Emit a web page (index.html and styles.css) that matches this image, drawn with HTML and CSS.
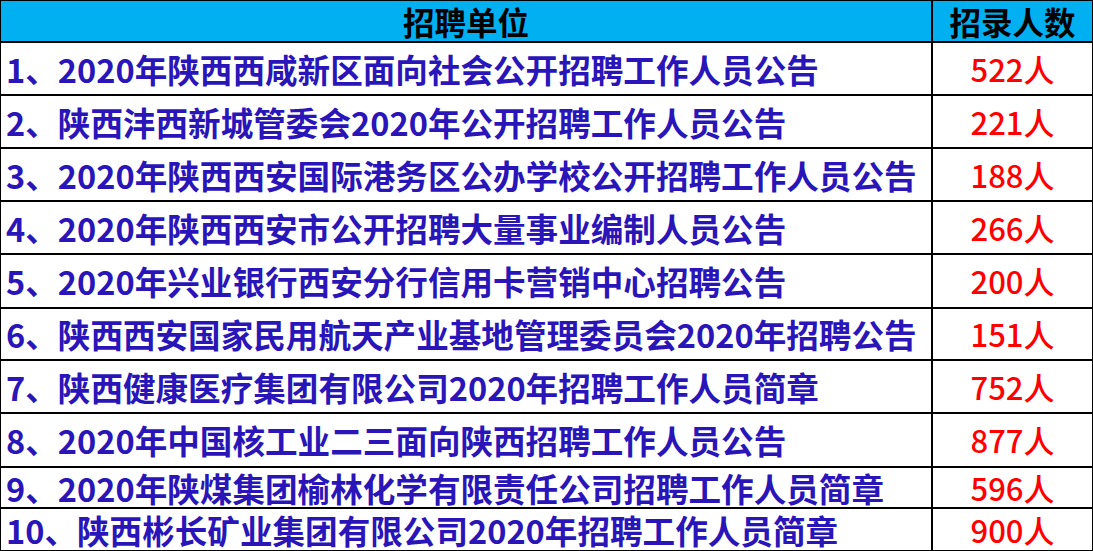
FILE: index.html
```html
<!DOCTYPE html>
<html lang="zh">
<head>
<meta charset="utf-8">
<title>招聘单位</title>
<link rel="stylesheet" href="styles.css">
</head>
<body>
<div class="sheet">
  <div class="cell head">招聘单位</div>
  <div class="cell head">招录人数</div>

  <div class="cell name">1、2020年陕西西咸新区面向社会公开招聘工作人员公告</div>
  <div class="cell num">522人</div>

  <div class="cell name">2、陕西沣西新城管委会2020年公开招聘工作人员公告</div>
  <div class="cell num">221人</div>

  <div class="cell name">3、2020年陕西西安国际港务区公办学校公开招聘工作人员公告</div>
  <div class="cell num">188人</div>

  <div class="cell name">4、2020年陕西西安市公开招聘大量事业编制人员公告</div>
  <div class="cell num">266人</div>

  <div class="cell name">5、2020年兴业银行西安分行信用卡营销中心招聘公告</div>
  <div class="cell num">200人</div>

  <div class="cell name">6、陕西西安国家民用航天产业基地管理委员会2020年招聘公告</div>
  <div class="cell num">151人</div>

  <div class="cell name">7、陕西健康医疗集团有限公司2020年招聘工作人员简章</div>
  <div class="cell num">752人</div>

  <div class="cell name">8、2020年中国核工业二三面向陕西招聘工作人员公告</div>
  <div class="cell num">877人</div>

  <div class="cell name">9、2020年陕煤集团榆林化学有限责任公司招聘工作人员简章</div>
  <div class="cell num">596人</div>

  <div class="cell name">10、陕西彬长矿业集团有限公司2020年招聘工作人员简章</div>
  <div class="cell num">900人</div>
</div>
</body>
</html>
```

FILE: styles.css
```css
html, body {
  margin: 0;
  padding: 0;
  background: #ffffff;
}

.sheet {
  width: 1093px;
  height: 551px;
  box-sizing: border-box;
  padding: 1px;
  background: #000000;
  display: grid;
  grid-template-columns: 930px 1fr;
  grid-template-rows: 40px 51px 51px 51px 51px 52px 50px 51px 52px 39px 41px;
  gap: 2px;
  font-family: "Noto Sans CJK SC", "Noto Sans", sans-serif;
}

.cell {
  display: flex;
  align-items: center;
  background: #ffffff;
  white-space: nowrap;
  line-height: 1.15;
  min-width: 0;
}

.head {
  background: #00b0f0;
  justify-content: center;
  color: #000000;
  font-weight: 700;
  font-size: 31.5px;
}

.name {
  color: #2a16b8;
  font-weight: 700;
  font-size: 32.6px;
  padding-left: 5px;
}

.num {
  justify-content: center;
  color: #ff0000;
  font-weight: 500;
  font-size: 31px;
}
```
